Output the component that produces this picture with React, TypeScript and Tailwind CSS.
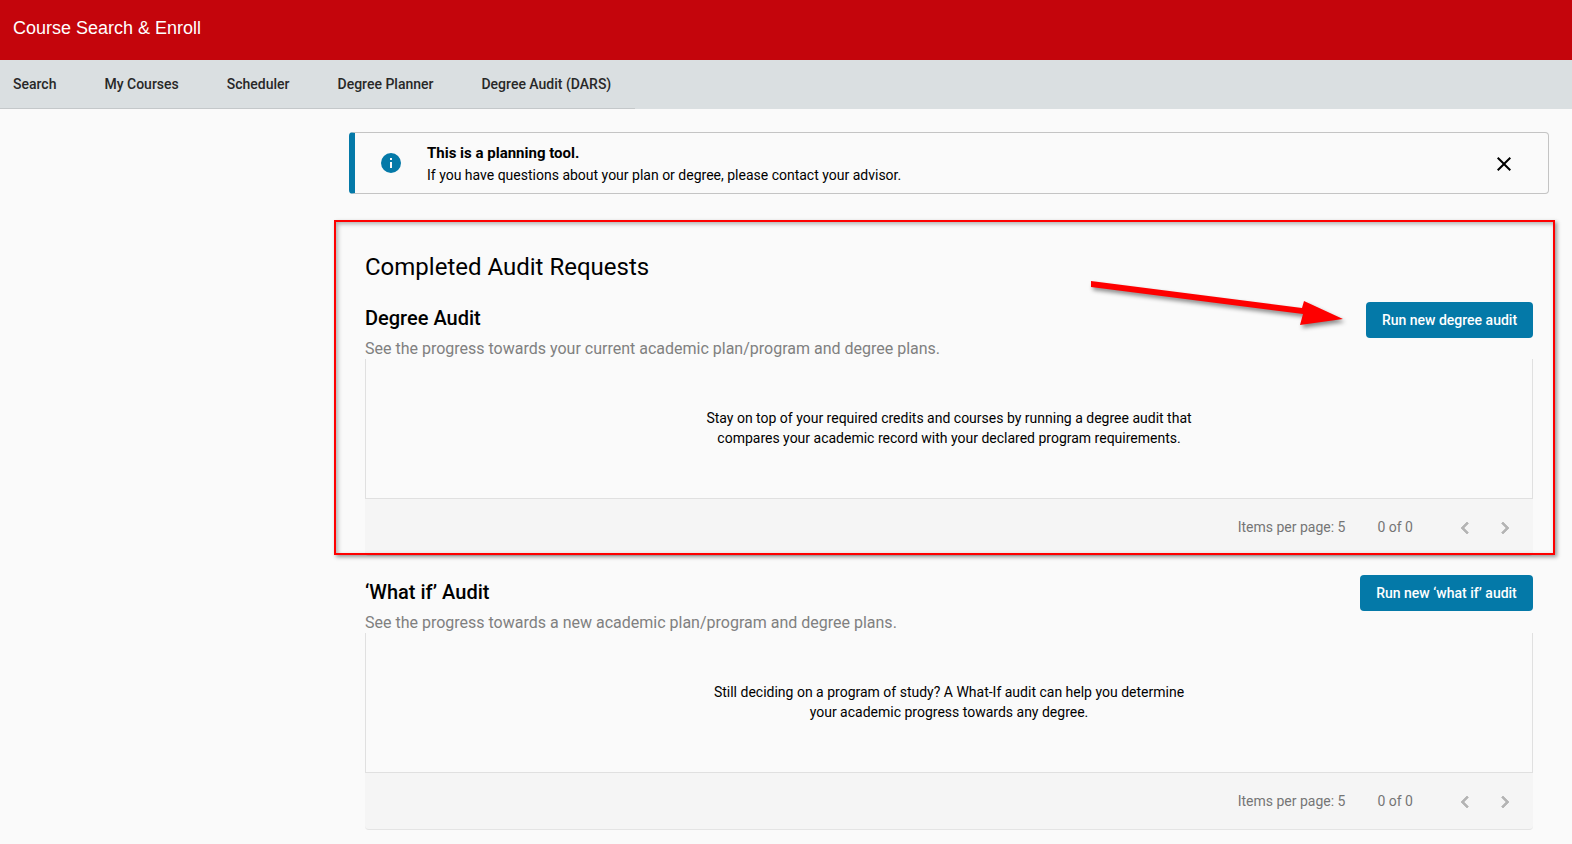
const tabs = ["Search", "My Courses", "Scheduler", "Degree Planner", "Degree Audit (DARS)"];

function Chevron({ dir }: { dir: "left" | "right" }) {
  return (
    <svg width="24" height="24" viewBox="0 0 24 24" className="text-[#b4b4b4]" fill="currentColor" stroke="currentColor" strokeWidth="0.8">
      {dir === "left" ? (
        <path d="M15.41 7.41 14 6l-6 6 6 6 1.41-1.41L10.83 12z" />
      ) : (
        <path d="M8.59 16.59 10 18l6-6-6-6-1.41 1.41L13.17 12z" />
      )}
    </svg>
  );
}

function AuditSection({
  title,
  subtitle,
  button,
  lines,
  buttonClass,
}: {
  title: string;
  subtitle: string;
  button: string;
  lines: string[];
  buttonClass: string;
}) {
  return (
    <section>
      <div className="flex justify-between items-start h-[53px]">
        <div>
          <h3 className="text-[20px] leading-[26px] font-medium text-black mt-[-1px]">{title}</h3>
          <p className="text-[16px] leading-[24px] text-[#808080] mt-[6px]">{subtitle}</p>
        </div>
        <button className={`h-[36px] ${buttonClass} rounded bg-[#0479a8] text-white text-[14px] font-medium`}>
          {button}
        </button>
      </div>
      <div className="h-[140px] border-x border-b border-[#e0e0e0] flex flex-col items-center justify-center text-[14px] leading-[20px] text-black pb-[1px]">
        {lines.map((l) => (
          <div key={l}>{l}</div>
        ))}
      </div>
      <div className="h-[57px] bg-[#f5f5f5] rounded-b border-b border-[#e4e4e4] flex items-center justify-end text-[14px] text-[#757575] pr-[16px] pb-[1px]">
        <span className="pt-[1px]">Items per page: 5</span>
        <span className="ml-[32px] pt-[1px]">0 of 0</span>
        <div className="ml-[40px] flex gap-[16px] pt-[2px]">
          <Chevron dir="left" />
          <Chevron dir="right" />
        </div>
      </div>
    </section>
  );
}

export default function App() {
  return (
    <div className="relative h-[844px] overflow-hidden bg-[#fafafa] font-['Roboto',sans-serif]">
      <header className="h-[60px] bg-[#c4050c] flex items-center px-[13px] pb-[4px] text-white text-[18px] font-['Liberation_Sans',sans-serif]">
        Course Search &amp; Enroll
      </header>
      <nav className="h-[49px] bg-[#dadfe1]">
        <div className="w-[635px] h-full border-b border-[#c4c8ca] flex items-center pl-[13px] gap-[48px] text-[14px] font-medium text-[#282828]">
          {tabs.map((t) => (
            <span key={t}>{t}</span>
          ))}
        </div>
      </nav>

      <main className="pl-[349px] pr-[23px] pt-[23px]">
        <div className="h-[62px] flex items-center rounded border border-[#c4c4c4] border-l-[6px] border-l-[#0479a8] text-[14px] leading-[22px] text-black">
          <svg width="24" height="24" viewBox="0 0 24 24" className="ml-[24px] text-[#0479a8]" fill="currentColor">
            <path d="M12 2a10 10 0 1 0 0 20 10 10 0 0 0 0-20zm1 15h-2v-6h2v6zm0-8h-2V7h2v2z" />
          </svg>
          <div className="ml-[24px] pt-[2px]">
            <div className="font-bold text-[15px]">This is a planning tool.</div>
            <div>If you have questions about your plan or degree, please contact your advisor.</div>
          </div>
          <svg width="24" height="24" viewBox="0 0 24 24" className="ml-auto mr-[32px] mt-[2px] text-black" fill="currentColor">
            <path d="M19 6.41 17.59 5 12 10.59 6.41 5 5 6.41 10.59 12 5 17.59 6.41 19 12 13.41 17.59 19 19 17.59 13.41 12z" />
          </svg>
        </div>

        <div className="px-[16px]">
          <h2 className="text-[24px] leading-[32px] text-black mt-[57px] mb-[23px]">Completed Audit Requests</h2>
          <AuditSection
            title="Degree Audit"
            subtitle="See the progress towards your current academic plan/program and degree plans."
            button="Run new degree audit"
            buttonClass="w-[167px] mt-[-4px]"
            lines={[
              "Stay on top of your required credits and courses by running a degree audit that",
              "compares your academic record with your declared program requirements.",
            ]}
          />
          <div className="h-[24px]" />
          <AuditSection
            title="‘What if’ Audit"
            subtitle="See the progress towards a new academic plan/program and degree plans."
            button="Run new ‘what if’ audit"
            buttonClass="w-[173px] mt-[-5px]"
            lines={[
              "Still deciding on a program of study? A What-If audit can help you determine",
              "your academic progress towards any degree.",
            ]}
          />
        </div>
      </main>

      {/* annotation drawn over the page */}
      <div className="absolute left-[334px] top-[220px] w-[1221px] h-[335px] border-2 border-[#fe0000] shadow-[2px_2px_4px_rgba(0,0,0,0.4),inset_2px_2px_4px_rgba(0,0,0,0.3)] pointer-events-none" />
      <svg width="270" height="60" viewBox="0 0 270 60" className="absolute left-[1085px] top-[274px] overflow-visible drop-shadow-[2px_3px_2px_rgba(0,0,0,0.45)]">
        <polygon points="6,7 6,13 218,40 215,51 258,45 219,27 217,34" fill="#fe0000" />
      </svg>
    </div>
  );
}
